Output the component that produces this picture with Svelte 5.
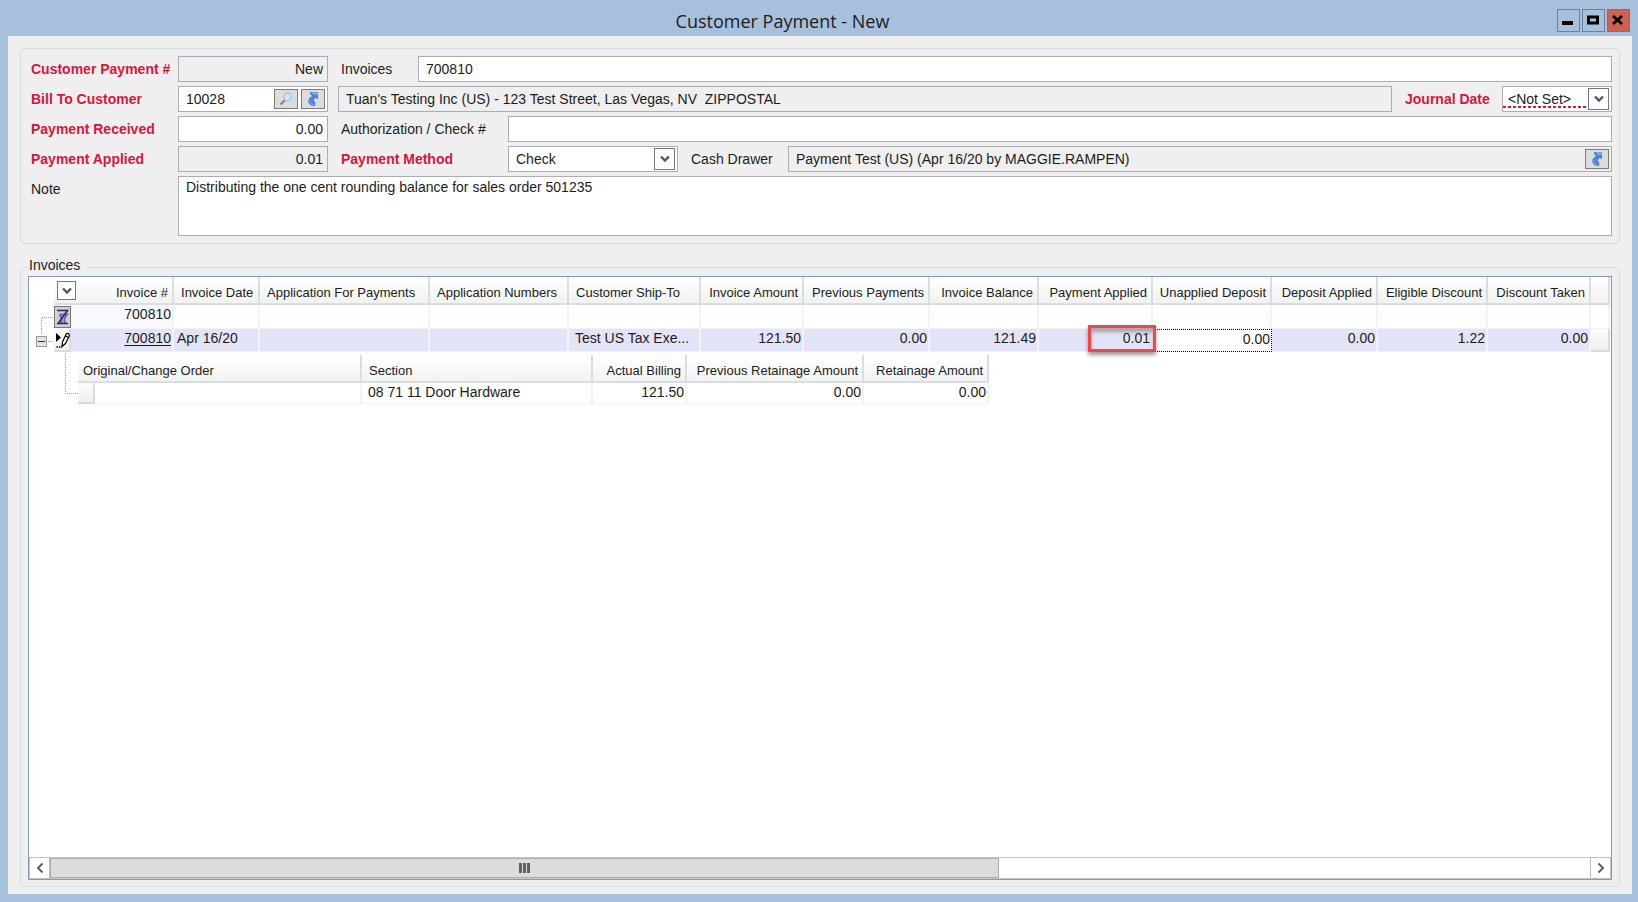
<script lang="ts">
    interface Column {
        title: string;
        width: number;
        right?: boolean;
        value?: string;
    }

    const columns: Column[] = [
        { title: "Invoice Date", width: 86, value: "Apr 16/20" },
        { title: "Application For Payments", width: 170 },
        { title: "Application Numbers", width: 139 },
        { title: "Customer Ship-To", width: 132, value: "Test US Tax Exe..." },
        { title: "Invoice Amount", width: 103, right: true, value: "121.50" },
        { title: "Previous Payments", width: 126, right: true, value: "0.00" },
        { title: "Invoice Balance", width: 109, right: true, value: "121.49" },
        { title: "Payment Applied", width: 114, right: true, value: "0.01" },
        { title: "Unapplied Deposit", width: 119, right: true, value: "0.00" },
        { title: "Deposit Applied", width: 106, right: true, value: "0.00" },
        { title: "Eligible Discount", width: 110, right: true, value: "1.22" },
        { title: "Discount Taken", width: 103, right: true, value: "0.00" },
    ];

    let invoices = $state("700810");
    let customer = $state("10028");
    let received = $state("0.00");
    let check_number = $state("");
    let note = $state("Distributing the one cent rounding balance for sales order 501235");
    let expanded = $state(true);
</script>

{#snippet chevron()}
    <svg width="10" height="8" viewBox="0 0 10 8" aria-hidden="true">
        <path d="M1 1.5 L5 5.5 L9 1.5" fill="none" stroke="#555" stroke-width="2.4" />
    </svg>
{/snippet}

{#snippet arrow()}
    <svg width="14" height="16" viewBox="0 0 14 16" aria-hidden="true">
        <path d="M4 1 H12 V8.500 L10 7 C7.500 8 7.500 10 9.500 11.500 L9 15 H6.500 C3 13.500 1.500 11 2.500 8.500 C3 7 4.500 6 6 5 L4 3 Z" fill="#4f83dc" />
        <path d="M5 1.500 H11.500 V4 L8 3.500 Z" fill="#8fb4f0" />
        <path d="M3.500 9 C3.500 11 5 13 7.500 14" fill="none" stroke="#87acee" stroke-width="1" />
    </svg>
{/snippet}

<div class="window">
    <header>
        <h1>Customer Payment - New</h1>
        <div class="controls">
            <button aria-label="Minimize">
                <svg width="21" height="21" viewBox="0 0 21 21"><rect x="4" y="11" width="11" height="4" /></svg>
            </button>
            <button aria-label="Maximize">
                <svg width="21" height="21" viewBox="0 0 21 21"><rect x="5.500" y="7" width="9" height="6" fill="none" stroke="#000" stroke-width="3" /></svg>
            </button>
            <button class="close" aria-label="Close">
                <svg width="21" height="21" viewBox="0 0 21 21"><path d="M5 6 L14 14 M14 6 L5 14" fill="none" stroke="#000" stroke-width="3" /></svg>
            </button>
        </div>
    </header>

    <main>
        <section class="details" aria-label="Payment details">
            <label class="required" for="payment-number">Customer Payment #</label>
            <input id="payment-number" class="box right" value="New" readonly />
            <div class="line">
                <label class="short" for="invoices">Invoices</label>
                <input id="invoices" class="box grow" bind:value={invoices} />
            </div>

            <label class="required" for="customer">Bill To Customer</label>
            <div class="box lookup">
                <input id="customer" bind:value={customer} />
                <button aria-label="Find customer">
                    <svg width="14" height="14" viewBox="0 0 14 14">
                        <path d="M1.500 12.500 L6 8" stroke="#a9795f" stroke-width="2.200" />
                        <circle cx="8.500" cy="5" r="3.800" fill="#c9e8fa" stroke="#9bbfe6" stroke-width="1.200" />
                    </svg>
                </button>
                <button aria-label="Open customer">{@render arrow()}</button>
            </div>
            <div class="line">
                <input class="box grow" aria-label="Customer address" value="Tuan's Testing Inc (US) - 123 Test Street, Las Vegas, NV&nbsp; ZIPPOSTAL" readonly />
                <label class="required after" for="journal-date">Journal Date</label>
                <div class="box combo date">
                    <select id="journal-date"><option>&lt;Not Set&gt;</option></select>
                    <span class="drop">{@render chevron()}</span>
                </div>
            </div>

            <label class="required" for="received">Payment Received</label>
            <input id="received" class="box right" bind:value={received} />
            <div class="line">
                <label class="long" for="check-number">Authorization / Check #</label>
                <input id="check-number" class="box grow" bind:value={check_number} />
            </div>

            <label class="required" for="applied">Payment Applied</label>
            <input id="applied" class="box right" value="0.01" readonly />
            <div class="line">
                <label class="required long" for="method">Payment Method</label>
                <div class="box combo method">
                    <select id="method"><option>Check</option></select>
                    <span class="drop">{@render chevron()}</span>
                </div>
                <label class="after" for="drawer">Cash Drawer</label>
                <div class="box lookup grow locked">
                    <input id="drawer" value="Payment Test (US) (Apr 16/20 by MAGGIE.RAMPEN)" readonly />
                    <button aria-label="Open cash drawer">{@render arrow()}</button>
                </div>
            </div>

            <label for="note">Note</label>
            <textarea id="note" class="box" bind:value={note}></textarea>
        </section>

        <section class="invoices">
            <h2>Invoices</h2>
            <div class="grid">
                <div class="rows">
                    <table class="outer">
                        <colgroup>
                            <col width="25" />
                            <col width="17" />
                            <col width="103" />
                            {#each columns as column}
                                <col width={column.width} />
                            {/each}
                            <col width="19" />
                            <col />
                        </colgroup>
                        <thead>
                            <tr>
                                <td></td>
                                <th colspan="2" class="number first">
                                    <button class="drop picker" aria-label="Choose columns">{@render chevron()}</button>
                                    Invoice #
                                </th>
                                {#each columns as column}
                                    <th class:number={column.right}>{column.title}</th>
                                {/each}
                                <th aria-label="More"></th>
                                <td></td>
                            </tr>
                        </thead>
                        <tbody>
                            <tr class="filter">
                                <td class="tree">
                                    <svg width="25" height="24" viewBox="0 0 25 24"><path d="M12.500 24 V12.500 H25" /></svg>
                                </td>
                                <td class="tree">
                                    <button class="clear" aria-label="Clear filter">
                                        <svg width="13" height="18" viewBox="0 0 13 18">
                                            <path d="M3.500 6.500 H11 L8.500 10 V15 H10 M5.500 15 V10 L3.500 6.500" />
                                            <path class="slash" d="M1 2.500 H11.500 L2 15.500 H12" />
                                        </svg>
                                    </button>
                                </td>
                                <td class="number key">700810</td>
                                {#each columns as column (column.title)}
                                    <td></td>
                                {/each}
                                <td></td>
                                <td class="tree"></td>
                            </tr>
                            <tr class="current">
                                <td class="tree">
                                    <button class="toggle" aria-label="Toggle sections" onclick={() => (expanded = !expanded)}>
                                        <svg width="25" height="23" viewBox="0 0 25 23">
                                            <path d="M12.500 0 V6 M19 12.500 H25" />
                                            <rect x="7.500" y="7.500" width="10" height="10" fill="#e4e4e4" stroke="#999" />
                                            <path class="minus" d="M9 12.500 H16" />
                                        </svg>
                                    </button>
                                </td>
                                <td class="selector">
                                    <svg width="17" height="21" viewBox="0 0 17 21">
                                        <path d="M2 4 L7 8.500 L2 13 Z" fill="#000" />
                                        <path d="M8 17.500 L8.500 13 L12 5.500 C13 3.500 16 4.500 15.200 7 L11.500 14.500 Z M11.500 7 L14.500 8.500" fill="#fff" stroke="#000" stroke-width="1.200" />
                                        <path d="M2.500 18 H8" stroke="#000" stroke-width="1.500" stroke-dasharray="1.500 1" />
                                    </svg>
                                </td>
                                <td class="number"><a href="#700810">700810</a></td>
                                {#each columns as column}
                                    <td
                                        class:number={column.right}
                                        class:ship-to={column.title === "Customer Ship-To"}
                                        class:focused={column.title === "Unapplied Deposit"}
                                    >
                                        {column.value ?? ""}
                                        {#if column.title === "Payment Applied"}
                                            <span class="highlight"></span>
                                        {/if}
                                    </td>
                                {/each}
                                <td class="selector"></td>
                                <td class="tree"></td>
                            </tr>
                            {#if expanded}
                                <tr>
                                    <td class="child" colspan="17">
                                        <div class="branch">
                                            <svg width="49" height="52" viewBox="0 0 49 52"><path d="M36.500 1 V41.500 H49" /></svg>
                                            <table class="inner">
                                                <colgroup>
                                                    <col width="17" />
                                                    <col width="267" />
                                                    <col width="231" />
                                                    <col width="94" />
                                                    <col width="177" />
                                                    <col width="125" />
                                                </colgroup>
                                                <thead>
                                                    <tr>
                                                        <th colspan="2" class="origin">Original/Change Order</th>
                                                        <th>Section</th>
                                                        <th class="number">Actual Billing</th>
                                                        <th class="number">Previous Retainage Amount</th>
                                                        <th class="number">Retainage Amount</th>
                                                    </tr>
                                                </thead>
                                                <tbody>
                                                    <tr>
                                                        <td class="selector"></td>
                                                        <td></td>
                                                        <td class="section">08 71 11 Door Hardware</td>
                                                        <td class="number">121.50</td>
                                                        <td class="number">0.00</td>
                                                        <td class="number">0.00</td>
                                                    </tr>
                                                </tbody>
                                            </table>
                                        </div>
                                    </td>
                                </tr>
                            {/if}
                        </tbody>
                    </table>
                </div>
                <div class="scrollbar">
                    <button aria-label="Scroll left">
                        <svg width="8" height="12" viewBox="0 0 8 12"><path d="M6.500 1.500 L2 6 L6.500 10.500" /></svg>
                    </button>
                    <div class="track">
                        <div class="thumb">
                            <svg width="11" height="10" viewBox="0 0 11 10"><path d="M1.500 0 V10 M5.500 0 V10 M9.500 0 V10" /></svg>
                        </div>
                    </div>
                    <button aria-label="Scroll right">
                        <svg width="8" height="12" viewBox="0 0 8 12"><path d="M1.500 1.500 L6 6 L1.500 10.500" /></svg>
                    </button>
                </div>
            </div>
        </section>
    </main>
</div>

<style>
    :global(body) {
        margin: 0;
    }

    .window {
        box-sizing: border-box;
        display: flex;
        flex-direction: column;
        min-height: 100vh;
        padding: 0 6px 8px 8px;
        background: #a7c0dc;
        color: #1c1c1c;
        font: 14px/18px "Liberation Sans", Arial, sans-serif;
    }

    .window :is(input, select, textarea, button) {
        box-sizing: border-box;
        margin: 0;
        font: inherit;
        color: inherit;
    }

    header {
        display: flex;
        align-items: center;
        height: 36px;
    }

    h1 {
        flex: 1;
        margin: 0;
        padding-top: 6px;
        text-align: center;
        font: 18px/24px "Open Sans", "Segoe UI", sans-serif;
    }

    .controls {
        display: flex;
        gap: 2px;
        padding: 4px 2px 0 0;
    }

    .controls button {
        width: 23px;
        height: 23px;
        padding: 0;
        border: 1px solid #6c7f9c;
        background: #a7c0dc;
    }

    .controls .close {
        border-color: #c4574a;
        background: #cf6150;
    }

    .controls svg {
        display: block;
    }

    main {
        flex: 1;
        display: flex;
        flex-direction: column;
        gap: 23px;
        padding: 12px 12px 7px;
        background: #efefef;
    }

    section {
        min-width: 0;
        border: 1px solid #d6dfe6;
        border-radius: 5px;
    }

    .details {
        display: grid;
        grid-template-columns: 147px 150px 1fr;
        grid-auto-rows: minmax(26px, auto);
        row-gap: 4px;
        align-items: center;
        padding: 7px 7px 7px 10px;
    }

    .required {
        color: #dc143c;
        font-weight: bold;
    }

    .line {
        display: flex;
        align-items: center;
        min-width: 0;
        padding-left: 10px;
    }

    .line label {
        box-sizing: border-box;
        flex: none;
        padding-left: 3px;
    }

    .line .short {
        width: 80px;
    }

    .line .long {
        width: 170px;
    }

    .line .after {
        width: 110px;
        padding-left: 13px;
    }

    .window .box {
        box-sizing: border-box;
        min-width: 0;
        height: 26px;
        padding: 0 7px;
        border: 1px solid #abadb3;
        border-radius: 0;
        background: #fff;
    }

    .window .box:read-only:is(input),
    .window .locked {
        background: #efefef;
    }

    .window .right {
        padding-right: 4px;
        text-align: right;
    }

    .grow {
        flex: 1;
    }

    label[for="note"] {
        align-self: start;
        padding-top: 4px;
    }

    .window textarea.box {
        grid-column: 2 / 4;
        height: 60px;
        padding: 1px 7px;
        resize: none;
    }

    .window .lookup {
        display: flex;
        align-items: center;
        gap: 3px;
        padding-right: 2px;
    }

    .lookup input,
    .combo select {
        flex: 1;
        min-width: 0;
        padding: 0;
        border: 0;
        outline: 0;
        background: none;
        appearance: none;
    }

    .lookup button {
        display: flex;
        align-items: center;
        justify-content: center;
        width: 24px;
        height: 20px;
        padding: 0;
        border: 1px solid #7c7c7c;
        background: #dcdcdc;
    }

    .window .combo {
        position: relative;
        display: flex;
        align-items: center;
        padding: 0;
    }

    .combo select {
        align-self: stretch;
        padding: 0 24px 0 7px;
    }

    .method {
        width: 170px;
    }

    .date {
        width: 110px;
    }

    .date select {
        padding-left: 5px;
    }

    .date::before {
        content: "";
        position: absolute;
        left: 0;
        right: 24px;
        bottom: 3px;
        height: 2px;
        background: repeating-linear-gradient(90deg, #dc143c 0 3px, transparent 3px 5px);
    }

    .drop {
        box-sizing: border-box;
        display: flex;
        align-items: center;
        justify-content: center;
        border: 1px solid #777;
        background: #fff;
    }

    .combo .drop {
        position: absolute;
        top: 1px;
        right: 2px;
        width: 21px;
        height: 22px;
        pointer-events: none;
    }

    .invoices {
        flex: 1;
        display: flex;
        flex-direction: column;
        padding: 0 7px 6px;
    }

    h2 {
        align-self: flex-start;
        margin: -10px 0 4px -1px;
        padding: 0 6px 0 2px;
        background: #efefef;
        font-size: 14px;
        font-weight: normal;
        line-height: 14px;
    }

    .grid {
        flex: 1;
        display: flex;
        flex-direction: column;
        min-width: 0;
        border: 1px solid #8599c0;
        background: #fff;
    }

    .rows {
        flex: 1;
        overflow: hidden;
    }

    table {
        table-layout: fixed;
        border-collapse: separate;
        border-spacing: 0;
    }

    .outer {
        width: 100%;
    }

    .inner {
        width: 911px;
    }

    th {
        box-sizing: border-box;
        height: 28px;
        padding: 5px 4px 0 7px;
        border: solid #dadede;
        border-width: 0 2px 2px 0;
        background: linear-gradient(#fff, #f1f2f2);
        font-size: 13px;
        font-weight: normal;
        line-height: 18px;
        text-align: left;
        white-space: nowrap;
    }

    th.number {
        padding-right: 4px;
        padding-left: 0;
    }

    .first {
        position: relative;
    }

    .window .picker {
        position: absolute;
        top: 4px;
        left: 3px;
        width: 19px;
        height: 19px;
        padding: 0;
    }

    th.origin {
        padding-left: 5px;
    }

    td {
        position: relative;
        box-sizing: border-box;
        padding: 0 0 0 3px;
        vertical-align: top;
        white-space: nowrap;
    }

    .number {
        text-align: right;
    }

    td.number {
        padding-right: 1px;
    }

    .filter td,
    .current td,
    .inner td {
        border: solid #f3f3f5;
        border-width: 0 2px 1px 0;
    }

    .filter td {
        height: 24px;
    }

    .current td {
        height: 23px;
        background: #e4e4f8;
    }

    .inner td {
        height: 21px;
    }

    .filter .key {
        background: #f7f9ff;
    }

    .rows .tree {
        padding: 0;
        border: 0;
        background: #fff;
    }

    td svg {
        display: block;
    }

    .tree path,
    .branch > svg path {
        fill: none;
        stroke: #aaa;
        stroke-dasharray: 1 1;
    }

    .tree .clear path,
    .tree .minus {
        stroke-dasharray: none;
    }

    .tree .minus {
        stroke: #333;
    }

    .tree .clear path {
        stroke: #6966cc;
        stroke-width: 2;
    }

    .tree .clear .slash {
        stroke: #26264e;
        stroke-width: 1.5;
    }

    .clear {
        width: 17px;
        height: 22px;
        margin-top: 2px;
        padding: 1px;
        border: 1px solid #777;
        background: #cfcfd4;
        vertical-align: top;
    }

    .window .clear {
        margin-top: 1px;
    }

    .toggle {
        display: block;
        padding: 0;
        border: 0;
        background: none;
    }

    .rows .selector {
        padding: 0;
        border: solid #d9dcdc;
        border-width: 0 2px 2px 0;
        background: linear-gradient(#fcfcfc, #f0f0f0);
    }

    .current .selector svg {
        width: 17px;
        margin-right: -2px;
    }

    .current a {
        color: inherit;
        text-underline-offset: 2px;
    }

    td.ship-to,
    td.section {
        padding-left: 6px;
    }

    .current .focused {
        border: 1px dotted #000;
        background: #fff;
    }

    .highlight {
        position: absolute;
        z-index: 1;
        top: -4px;
        right: -5px;
        box-sizing: border-box;
        width: 68px;
        height: 27px;
        border: 3px solid #f84444;
        box-shadow:
            0 3px 4px rgba(0, 0, 0, 0.4),
            inset 0 4px 4px rgba(0, 0, 0, 0.3);
    }

    .child {
        padding: 0;
    }

    .branch {
        display: flex;
        align-items: flex-start;
    }

    .branch > svg {
        flex: none;
    }

    .inner {
        flex: none;
        margin-top: 3px;
    }

    .scrollbar {
        display: flex;
        height: 22px;
    }

    .scrollbar button {
        display: flex;
        align-items: center;
        justify-content: center;
        width: 21px;
        padding: 0;
        border: 1px solid #c0c0c0;
        background: #fff;
    }

    .scrollbar path {
        fill: none;
        stroke: #606060;
        stroke-width: 2;
    }

    .thumb path {
        stroke-width: 3;
    }

    .track {
        flex: 1;
        border-top: 1px solid #c8c8c8;
        border-bottom: 1px solid #c8c8c8;
    }

    .thumb {
        box-sizing: border-box;
        display: flex;
        align-items: center;
        justify-content: center;
        width: 61.6%;
        height: 100%;
        border: 1px solid #acacac;
        background: #dcdcdc;
    }
</style>
